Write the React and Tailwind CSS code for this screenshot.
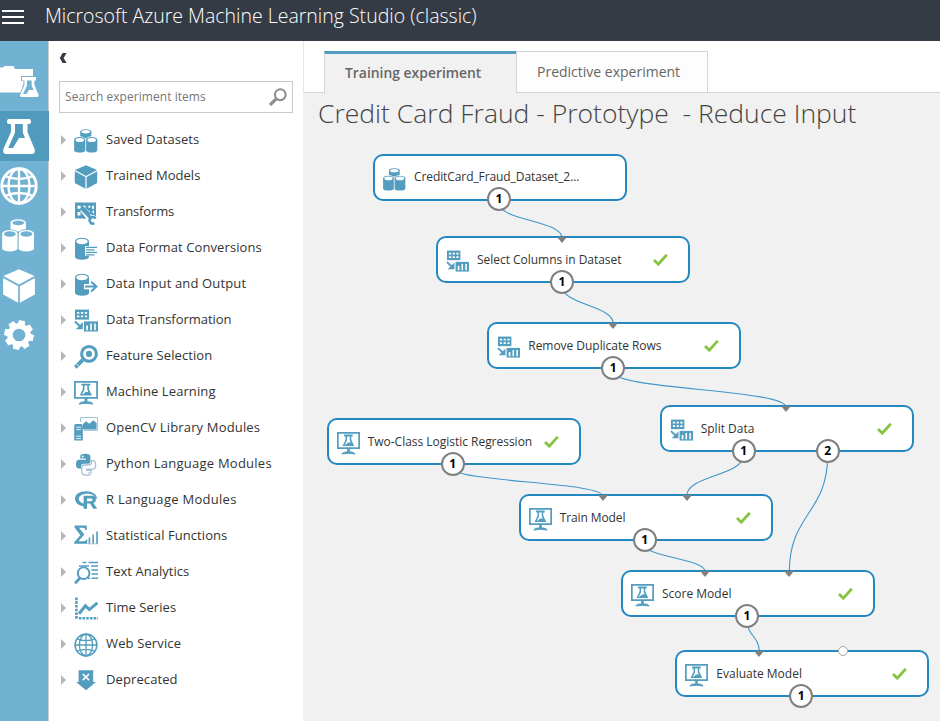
import React from "react";

function Can({ x, y, w, h, hole, ry = 2.2 }) {
  const r = w / 2;
  return (
    <g>
      <path d={`M${x} ${y + ry} A${r} ${ry} 0 0 1 ${x + w} ${y + ry} V${y + h - ry * 0.8} A${r} ${ry * 0.8} 0 0 1 ${x} ${y + h - ry * 0.8} Z`} fill="currentColor" />
      <ellipse cx={x + r} cy={y + ry + 0.2} rx={r - 1.3} ry={ry - 0.7} fill={hole} />
    </g>
  );
}

function Datasets({ hole = "#fff", className = "size-6" }) {
  return (
    <svg viewBox="0 0 24 24" className={className}>
      <Can x={6.2} y={0.2} w={11.2} h={9} hole={hole} ry={2.4} />
      <path d="M-.5 9.5 Q5.5 5 11.6 9.5 Q17.7 5 24 9.5 V12 H-.5 Z" fill={hole} />
      <Can x={0.1} y={8} w={11.2} h={15.6} hole={hole} ry={2.7} />
      <Can x={12.1} y={8} w={11.2} h={15.6} hole={hole} ry={2.7} />
    </svg>
  );
}

function Cube({ className = "size-6" }) {
  return (
    <svg viewBox="0 0 24 24" className={className} fill="currentColor">
      <path d="M12 .2 23 5 12 10.9 1 5Z" />
      <path d="M.8 6.3 11.4 12.1V23.8L.8 18Z" />
      <path d="M23.2 6.3 12.6 12.1V23.8L23.2 18Z" />
    </svg>
  );
}

function Globe({ className = "size-6", sw = 1.3 }) {
  return (
    <svg viewBox="0 0 24 24" className={className} fill="none" stroke="currentColor" strokeWidth={sw}>
      <circle cx="12" cy="12" r="10.9" strokeWidth={sw * 1.2} />
      <ellipse cx="12" cy="12" rx="6.6" ry="10.9" />
      <path d="M12 1V23M1 12H23M3.2 5.8Q12 9.4 20.8 5.8M3.2 18.2Q12 14.6 20.8 18.2" />
    </svg>
  );
}

function Transforms() {
  return (
    <svg viewBox="0 0 24 24" className="size-6">
      <path d="M1 1.5H22V17.5H1Z" fill="currentColor" />
      <path d="M3.5 4.8h3v3h-3zM9 4.8h2.6v3H9zM14.4 4.8h2v2h-2zM18 4.8h2v3h-2zM3.5 11h3v3.4h-3zM18.5 9.5H20v3h-1.5z" fill="#fff" />
      <path d="M6.5 5.5 11 6.8 22.5 16 23.8 23 14 23.5 13 18.5 6.6 10.5Z" fill="#fff" />
      <path d="M7.2 6.5 9.5 6.8 14.8 12.3Q18 11.5 19.2 14" fill="none" stroke="currentColor" strokeWidth="2.4" />
      <path d="M7 6.8 17.5 17.6" stroke="currentColor" strokeWidth="3.4" />
      <path d="M21.6 17.6A3.2 3.2 0 1 0 20.3 22.2" fill="none" stroke="currentColor" strokeWidth="2.5" />
      <path d="M9 14.8 12 17.5H9Z" fill="currentColor" />
    </svg>
  );
}

function DataFormat() {
  return (
    <svg viewBox="0 0 24 24" className="size-6">
      <Can x={1} y={0.8} w={14} h={22} hole="#fff" ry={3.5} />
      <path d="M11 9H24V18.8H11Z" fill="#fff" />
      <path d="M12 10.4H23M12 12.9H20.5M12 15.4H23M12 17.9H20.5" stroke="currentColor" strokeWidth="1.4" />
    </svg>
  );
}

function DataIO() {
  return (
    <svg viewBox="0 0 24 24" className="size-6">
      <Can x={1} y={0.8} w={14} h={22} hole="#fff" ry={3.5} />
      <path d="M10 11H15.6V7.6L18.5 7 24 13.6 18.5 20.2 15 19.6V16.2H10Z" fill="#fff" />
      <path d="M11 13.6H22.4M17.2 8.8 22.4 13.6 17.2 18.4" stroke="currentColor" strokeWidth="2" fill="none" />
    </svg>
  );
}

function DataTransformation({ className = "size-6" }) {
  return (
    <svg viewBox="0 0 24 24" className={className}>
      <path d="M1 .6H15V10.6H1Z" fill="currentColor" />
      <path d="M3 2.9h2.3v1.8H3zM6.9 2.9h2.3v1.8H6.9zM10.8 2.9h2.3v1.8h-2.3zM3 6.5h2.3v1.8H3zM6.9 6.5h2.3v1.8H6.9zM10.8 6.5h2.3v1.8h-2.3z" fill="#fff" />
      <path d="M1 12.6 6.5 17.8" stroke="currentColor" strokeWidth="2" />
      <path d="M8.8 13V20.2H1.8Z" fill="currentColor" />
      <path d="M10 12.4H24V22.5H10Z" fill="currentColor" />
      <path d="M12.2 16.6h1.8v4.6h-1.8zM16.2 14.6h1.6v6.6h-1.6zM20.2 14.6h1.6v6.6h-1.6z" fill="#fff" />
    </svg>
  );
}

function Feature() {
  return (
    <svg viewBox="0 0 24 24" className="size-6">
      <circle cx="15" cy="8.9" r="7.4" fill="none" stroke="currentColor" strokeWidth="3" />
      <circle cx="15" cy="8.9" r="3.1" fill="currentColor" />
      <path d="M1.3 22.4 8.8 14.9" stroke="currentColor" strokeWidth="3.8" />
      <path d="M2.2 18.6 5.2 21.6" stroke="#fff" strokeWidth=".9" />
    </svg>
  );
}

function Machine({ className = "size-6" }) {
  return (
    <svg viewBox="0 0 24 24" className={className}>
      <path d="M.9 .9H23.1V16.9H.9Z" fill="none" stroke="currentColor" strokeWidth="1.8" />
      <path d="M7.4 2.7H16.4V4.6H14.9V8L18 14.6H5.8L8.9 8V4.6H7.4Z" fill="currentColor" />
      <path d="M10.5 4.6H13.3V8.6L14.3 11 11.6 11 9 13.2H8.2L10.5 8.6Z" fill="#fff" />
      <path d="M12 17V21" stroke="currentColor" strokeWidth="2.8" />
      <path d="M5 23Q6 20.9 9 20.9H15Q18 20.9 19 23 12 21.5 5 23Z" fill="currentColor" stroke="currentColor" strokeWidth="1" />
    </svg>
  );
}

function OpenCV() {
  return (
    <svg viewBox="0 0 24 24" className="size-6">
      <path d="M6.6 5V.6H23.6V13.4H10" fill="none" stroke="#9cc3d6" strokeWidth="1" />
      <path d="M9 12.4V7L12 4.2 15.4 6.8 19.2 3.2 22.6 6V12.4Z" fill="currentColor" />
      <path d="M.2 9Q.2 7 2 7H7Q8.8 7 8.8 9V23.6H.2Z" fill="currentColor" />
      <path d="M2.2 10.2H7M2.2 12.6H7M2.2 19.2H7M2.2 21.6H7" stroke="#fff" strokeWidth=".9" />
    </svg>
  );
}

function Python() {
  return (
    <svg viewBox="0 0 24 24" className="size-6">
      <path d="M6.3 5.6V3.2Q6.3 .8 11.3 .8T16.4 3.4V8.4Q16.4 10.8 14 10.8H9.4Q7 10.8 7 13.4V15.4H4.8Q2 15.4 2 11.2T4.8 6.8H11.6V5.6Z" fill="currentColor" />
      <circle cx="8.7" cy="3.4" r=".9" fill="#fff" />
      <path d="M17.4 7.6H19Q21.6 7.6 21.6 11.8T19 16.2H12.8V17.4H17V19.4Q17 22.2 12.6 22.2T7.8 19.4V14.4Q7.8 12 10.4 12H15Q17.4 12 17.4 9.6Z" fill="#fff" stroke="#a9bfd3" strokeWidth="1.3" />
      <circle cx="14.6" cy="19.8" r=".8" fill="#a9bfd3" />
    </svg>
  );
}

function RLang() {
  return (
    <svg viewBox="0 0 24 24" className="size-6">
      <path d="M12 2.2C5.2 2.2 1 5.6 1 9.8S4.8 16.8 10 17.2V14.6C6.8 14 4.8 12.2 4.8 9.8 4.8 7 8.4 4.8 13 4.8S20.8 6.8 21.6 9.6L23 9.8C23 5.4 18.6 2.2 12 2.2Z" fill="currentColor" />
      <path d="M9.6 6.8H17.5Q22 6.8 22 10.6 22 13.2 19.4 14L23.2 19.8H19.2L16 14.6H13V19.8H9.6ZM13 9.4V12.2H16.8Q18.6 12.2 18.6 10.8T16.8 9.4Z" fill="currentColor" fillRule="evenodd" />
    </svg>
  );
}

function Stats() {
  return (
    <svg viewBox="0 0 24 24" className="size-6">
      <path d="M.6 .6H12.8V5H11.4Q11 2.8 9 2.8H5L10.4 9.6 4.4 16.2H10Q12 16.2 12.4 14.4L13.2 14.4V18.8H.2V17.2L6.4 10.2.6 2.4Z" fill="currentColor" />
      <path d="M15.4 12.5V19M19.2 9.6V19M23 6.6V19" stroke="currentColor" strokeWidth="1.6" />
      <path d="M13.4 18.8H24" stroke="#9cc3d6" strokeWidth=".8" />
    </svg>
  );
}

function TextAnalytics() {
  return (
    <svg viewBox="0 0 24 24" className="size-6">
      <path d="M8.5 1.5H12.5M14.5 1.5H24M5 5H15M17 5H24M17.5 9H24M17.5 13H24M14 17.2H16M17.5 17.2H24" stroke="currentColor" strokeWidth="1.6" />
      <circle cx="9.6" cy="12.2" r="5.8" fill="#fff" stroke="currentColor" strokeWidth="1.9" />
      <path d="M1 22.4 6 17" stroke="currentColor" strokeWidth="2.8" />
    </svg>
  );
}

function TimeSeries() {
  return (
    <svg viewBox="0 0 24 24" className="size-6">
      <path d="M2.4 .6V22" stroke="currentColor" strokeWidth="2.6" strokeDasharray="2.6 1.1" />
      <path d="M4.8 21.2H24" stroke="currentColor" strokeWidth="2.6" strokeDasharray="2.6 1.1" />
      <path d="M5 16.8 11.4 8.8 15.4 12.6 23.4 5.8" fill="none" stroke="currentColor" strokeWidth="3" />
    </svg>
  );
}

function Deprecated() {
  return (
    <svg viewBox="0 0 24 24" className="size-6">
      <path d="M4.6 1.2H19.2V13H22L12 21.2 2 13H4.6Z" fill="currentColor" />
      <path d="M8.8 5 15 11.2M15 5 8.8 11.2" stroke="#fff" strokeWidth="1.7" />
    </svg>
  );
}

const ITEMS = [
  ["Saved Datasets", Datasets, "tracking-[0.07px]"],
  ["Trained Models", Cube, "tracking-[0.04px]"],
  ["Transforms", Transforms, "tracking-[-0.15px]"],
  ["Data Format Conversions", DataFormat, "tracking-[0.1px]"],
  ["Data Input and Output", DataIO, "tracking-[0.14px]"],
  ["Data Transformation", DataTransformation, "tracking-[-0.04px]"],
  ["Feature Selection", Feature, "tracking-[0.09px]"],
  ["Machine Learning", Machine, "tracking-[0.1px]"],
  ["OpenCV Library Modules", OpenCV, "tracking-[0.16px]"],
  ["Python Language Modules", Python, "tracking-[0.24px]"],
  ["R Language Modules", RLang, "tracking-[0.28px]"],
  ["Statistical Functions", Stats, "tracking-[0.07px]"],
  ["Text Analytics", TextAnalytics, "tracking-[0.03px]"],
  ["Time Series", TimeSeries, "tracking-[0.04px]"],
  ["Web Service", Globe, "tracking-[0.13px]"],
  ["Deprecated", Deprecated, "tracking-[0.1px]"],
];

const NODES = [
  { x: 373, y: 153.5, label: "CreditCard_Fraud_Dataset_2...", icon: Datasets, outs: [126], ins: [], done: false, track: "tracking-[-0.09px]" },
  { x: 436, y: 236.3, label: "Select Columns in Dataset", icon: DataTransformation, outs: [126], ins: [126], done: true, track: "tracking-[-0.03px]" },
  { x: 487.3, y: 322, label: "Remove Duplicate Rows", icon: DataTransformation, outs: [126], ins: [126], done: true, track: "tracking-[-0.04px]" },
  { x: 659.7, y: 405, label: "Split Data", icon: DataTransformation, outs: [84, 168], ins: [126], done: true, track: "" },
  { x: 326.7, y: 418, label: "Two-Class Logistic Regression", icon: Machine, outs: [126], ins: [], done: true, track: "tracking-[-0.02px]" },
  { x: 518.7, y: 494, label: "Train Model", icon: Machine, outs: [126], ins: [84, 168], done: true, track: "tracking-[-0.1px]" },
  { x: 621, y: 570, label: "Score Model", icon: Machine, outs: [126], ins: [84, 168], done: true, track: "" },
  { x: 675.3, y: 650.3, label: "Evaluate Model", icon: Machine, outs: [126], ins: [84], open: 168, done: true, track: "" },
];

const LINKS = [
  [499, 203, 562, 238],
  [562, 286, 613.3, 324],
  [613.3, 372, 785.7, 407],
  [743.7, 455, 686.7, 496],
  [827.7, 455, 789.3, 572],
  [452.7, 468, 602.7, 496],
  [644.7, 544, 705.3, 572],
  [747, 620, 759.3, 652],
];

function Node({ node }) {
  const Icon = node.icon;
  return (
    <div
      className="absolute flex h-[47px] w-[254px] items-center rounded-[10px] border-2 border-[#2488c0] bg-white pl-2"
      style={{ left: node.x - 303, top: node.y - 41 }}
    >
      <span className="mt-1 text-[#539dbf]">
        <Icon className="size-[23px]" />
      </span>
      <span className={"ml-2 w-44 whitespace-nowrap text-[12px] text-[#333] " + node.track}>{node.label}</span>
      {node.done && (
        <svg viewBox="0 0 15 12" className="h-3 w-[15px] shrink-0">
          <path d="M1 6 5.3 10.2 13.8 .8" fill="none" stroke="#86c440" strokeWidth="2.8" />
        </svg>
      )}
      {node.ins.map((c) => (
        <svg key={c} viewBox="0 0 10 6" className="absolute -top-px h-1.5 w-[10px]" style={{ left: c - 7 }}>
          <path d="M0 0H10L5 6Z" fill="#808080" />
        </svg>
      ))}
      {node.open && (
        <span className="absolute -top-1.5 size-2.5 rounded-full border border-[#a8a8a8] bg-white" style={{ left: node.open - 7 }} />
      )}
      {node.outs.map((c, i) => (
        <span
          key={c}
          className="absolute top-[31.5px] flex size-6 items-center justify-center rounded-full border-2 border-[#808080] bg-white text-[12px] font-bold leading-none text-black"
          style={{ left: c - 14 }}
        >
          {i + 1}
        </span>
      ))}
    </div>
  );
}

export default function App() {
  return (
    <div className="flex h-[721px] w-[940px] flex-col overflow-hidden bg-white font-['Open_Sans','Noto_Sans',sans-serif]">
      <header className="flex h-[41px] shrink-0 items-start bg-[#353b44] text-white">
        <div className="ml-0.5 mt-[10px] flex w-[22px] flex-col gap-[4px]">
          <span className="h-0.5 bg-white" />
          <span className="h-0.5 bg-white" />
          <span className="h-0.5 bg-white" />
        </div>
        <h1 className="ml-[21px] mt-[3px] whitespace-nowrap text-[19.5px] font-light leading-[26px]">Microsoft Azure Machine Learning Studio (classic)</h1>
      </header>
      <div className="flex min-h-0 flex-1">
        <nav className="flex w-[49px] shrink-0 flex-col border-r border-[#ccc] bg-[#71b1d2] text-white">
          <div className="h-[70px] pt-[25px]">
            <svg viewBox="0 0 40 34" className="h-[34px] w-10">
              <path d="M0 1.5H3L4.5 0H13.5L15 3H33V26.5H0Z" fill="#fff" />
              <path d="M21 10H37V15H34.5V18L40 32H18.5L23.5 18V15H21Z" fill="#71b1d2" />
              <path d="M22 11H36V14.4H34.4V19L38.7 29Q39 31 37 31H21.5Q19.5 31 20 29L24.4 19V14.4H22Z" fill="#fff" />
              <path d="M27 14.4H31.6V19.6L33.5 24H29L26.5 28H23L27 19.6Z" fill="#71b1d2" />
            </svg>
          </div>
          <div className="-mr-px h-[50px] bg-[#509bbd] pl-[3px] pt-2">
            <svg viewBox="0 0 32 35" className="h-[35px] w-8">
              <path d="M5.5 0H26.5Q28 0 28 2.5T26.5 5H24.5V13L31.6 30Q32.6 35 29 35H3Q-.6 35 .4 30L8 13V5H5.5Q4 5 4 2.5T5.5 0Z" fill="#fff" />
              <path d="M12 5H19.8V13.5L22 19H16L10 29H5.2L12 13.5Z" fill="#509bbd" />
            </svg>
          </div>
          <div className="h-[50px] pt-1.5">
            <Globe className="size-[38px]" sw={1.5} />
          </div>
          <div className="h-[50px] pl-0.5 pt-[7px]">
            <Datasets hole="#71b1d2" className="h-[35px] w-[33px]" />
          </div>
          <div className="h-[50px] pl-0.5 pt-[7px]">
            <Cube className="h-[36px] w-[34px]" />
          </div>
          <div className="h-[50px] pl-1 pt-[9px]">
            <svg viewBox="-15 -15 30 30" className="size-[30px]">
              {[0, 45, 90, 135, 180, 225, 270, 315].map((a) => (
                <path key={a} d="M-4 -9-3 -14.7H3L4 -9Z" fill="#fff" transform={`rotate(${a + 12})`} />
              ))}
              <circle r="9" fill="none" stroke="#fff" strokeWidth="5.4" />
            </svg>
          </div>
        </nav>
        <aside className="w-[254px] shrink-0">
          <div className="h-10 pl-[10px] pt-3">
            <svg viewBox="0 0 8 10" className="h-[10px] w-2">
              <path d="M3.6 0H7.6L4.6 5 7.6 10H3.6L.8 5Z" fill="#353b44" />
            </svg>
          </div>
          <div className="ml-[10px] flex h-8 w-[234px] items-center justify-between border border-[#c8c8c8] pl-[5px] pr-[5px]">
            <span className="text-[12px] tracking-[0.05px] text-[#767676]">Search experiment items</span>
            <svg viewBox="0 0 18 18" className="size-[18px]">
              <circle cx="11.3" cy="6.7" r="5.4" fill="none" stroke="#8e8e8e" strokeWidth="2.1" />
              <path d="M1 17 7.2 10.8" stroke="#8e8e8e" strokeWidth="3.2" />
            </svg>
          </div>
          <ul className="pt-[9px]">
            {ITEMS.map(([label, Icon, track]) => (
              <li key={label} className="flex h-9 items-center pl-3">
                <svg viewBox="0 0 5 10" className="h-[10px] w-[5px]">
                  <path d="M0 0 5 5 0 10Z" fill="#b4b4b4" />
                </svg>
                <span className="ml-2 mt-0.5 text-[#539dbf]">
                  <Icon />
                </span>
                <span className={"ml-2 whitespace-nowrap text-[13px] text-[#333] " + track}>{label}</span>
              </li>
            ))}
          </ul>
        </aside>
        <main className="relative min-w-0 flex-1 bg-[#f1f1f1]">
          <div className="flex h-[52px] items-stretch border-l border-[#e6e6e6] bg-white">
            <div className="w-5 border-b border-[#d4d4d4]" />
            <div className="mt-[10px] w-[192px] border-l border-t-[3px] border-l-[#d4d4d4] border-t-[#519cc0] bg-[#f1f1f1] pl-5 pt-[9px] text-[13.9px] font-semibold leading-5 text-[#666]">
              Training experiment
            </div>
            <div className="mt-[10px] w-[192px] border border-[#d4d4d4] bg-[#fdfdfd] pl-5 pt-[10px] text-[14px] leading-5 text-[#666]">
              Predictive experiment
            </div>
            <div className="flex-1 border-b border-[#d4d4d4]" />
          </div>
          <h2 className="whitespace-pre pl-[15px] text-[26.5px] font-light leading-10 text-[#444]">Credit Card Fraud - Prototype  - Reduce Input</h2>
          <svg viewBox="303 41 637 680" className="absolute inset-0 h-[680px] w-[637px]">
            {LINKS.map(([x1, y1, x2, y2]) => {
              const d = (y2 - y1) * 0.5;
              return <path key={x1 + "-" + x2} d={`M${x1} ${y1}C${x1} ${y1 + d} ${x2} ${y2 - d} ${x2} ${y2}`} fill="none" stroke="#4096c8" strokeWidth="1.1" />;
            })}
          </svg>
          {NODES.map((n) => (
            <Node key={n.label} node={n} />
          ))}
        </main>
      </div>
    </div>
  );
}
